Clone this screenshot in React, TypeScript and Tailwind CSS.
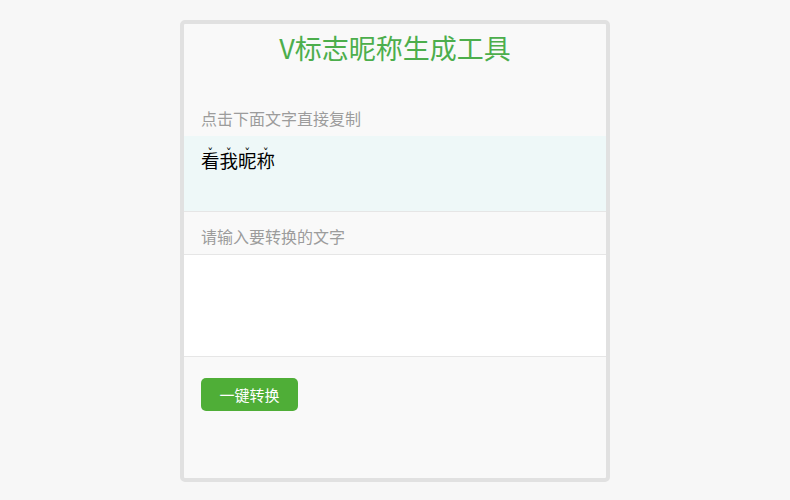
import React from "react";

const font = { fontFamily: '"Noto Sans CJK SC", "Noto Sans", sans-serif' };

const nickname = ["看", "我", "昵", "称"];

export default function App() {
  return (
    <div className="min-h-[500px] w-full bg-[#f7f7f7] pt-[20px]" style={font}>
      <div className="mx-auto box-border h-[462px] w-[430px] overflow-hidden rounded-[5px] border-4 border-[#e1e1e1] bg-[#f9f9f9]">
        {/* 标题 */}
        <h1 className="pt-[4px] text-center text-[27px] leading-[40px] font-normal text-[#4cae4c]">
          V标志昵称生成工具
        </h1>

        {/* 结果 */}
        <div className="mt-[32px] h-[36px] px-[17px] text-[16px] leading-[36px] text-[#9c9c9c]">
          点击下面文字直接复制
        </div>
        <div className="box-border h-[76px] cursor-pointer border-b border-[#e6e6e6] bg-[#eef8f8] px-[17px] pt-[15px] text-[18.5px] leading-[19px] text-black">
          {nickname.map((c, i) => (
            <span key={i} className="relative inline-block">
              {c}
              <span
                className="absolute bottom-full left-0 right-0 h-[4px] translate-y-[5px] text-center text-[12px] leading-[4px]"
                style={{ fontFamily: '"DejaVu Sans", sans-serif' }}
              >
                ˇ
              </span>
            </span>
          ))}
        </div>

        {/* 输入 */}
        <div className="h-[42px] px-[17px] pt-[6px] text-[16px] leading-[36px] text-[#9c9c9c]">
          请输入要转换的文字
        </div>
        <textarea className="box-border block h-[103px] w-full resize-none border-y border-[#e6e6e6] bg-white px-[17px] py-2 text-[16px] outline-none" />

        {/* 按钮 */}
        <div className="px-[17px] pt-[21px]">
          <button className="h-[33px] w-[97px] rounded-[5px] bg-[#4fae37] text-[15px] leading-[33px] text-white">
            一键转换
          </button>
        </div>
      </div>
    </div>
  );
}
